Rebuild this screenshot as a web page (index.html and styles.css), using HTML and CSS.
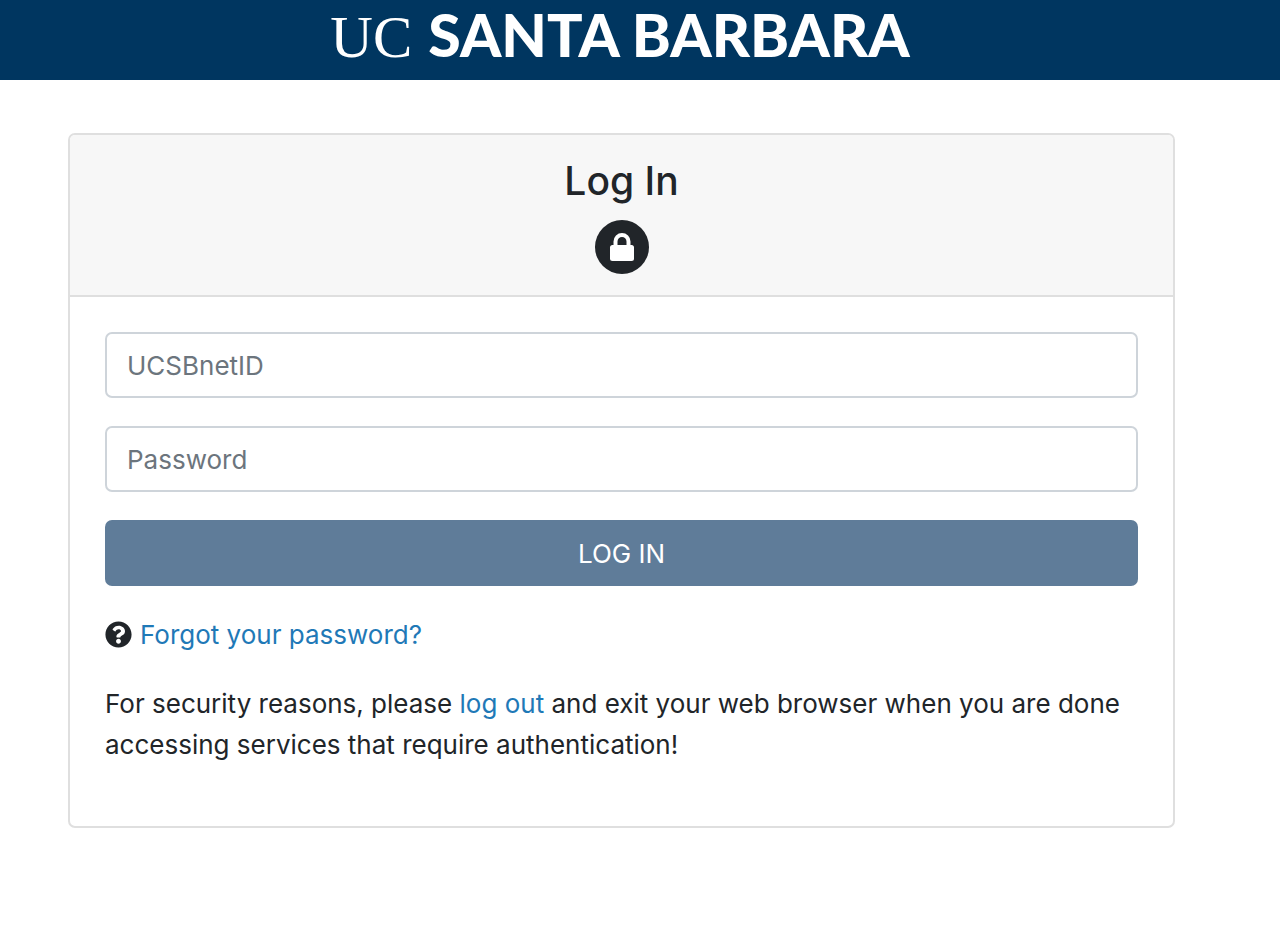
FILE: index.html
```html
<!DOCTYPE html>
<html lang="en">
<head>
<meta charset="utf-8">
<meta name="viewport" content="width=device-width, initial-scale=1">
<title>Log In</title>
<link rel="stylesheet" href="styles.css">
</head>
<body>
<header class="brand-bar">
  <div class="brand"><span class="brand-uc">UC</span> <span class="brand-name">SANTA BARBARA</span></div>
</header>
<main class="page">
  <section class="card">
    <div class="card-header">
      <h1 class="title">Log In</h1>
      <svg class="lock" viewBox="0 0 54 54" aria-hidden="true">
        <circle cx="27" cy="27" r="27" fill="#212529"/>
        <rect x="15" y="25" width="24" height="16" rx="2.500" fill="#fff"/>
        <path d="M20.500 26v-4.500a6.500 6.500 0 0 1 13 0V26" fill="none" stroke="#fff" stroke-width="4"/>
      </svg>
    </div>
    <form class="card-body">
      <input class="field" type="text" placeholder="UCSBnetID" aria-label="UCSBnetID">
      <input class="field" type="password" placeholder="Password" aria-label="Password">
      <button class="submit" type="submit">LOG IN</button>
      <p class="forgot">
        <svg class="help" viewBox="0 0 512 512" aria-hidden="true"><path fill="#212529" d="M504 256c0 136.997-111.043 248-248 248S8 392.997 8 256C8 119.083 119.043 8 256 8s248 111.083 248 248zM262.655 90c-54.497 0-89.255 22.957-116.549 63.758-3.536 5.286-2.353 12.415 2.715 16.258l34.699 26.310c5.205 3.947 12.621 3.008 16.665-2.122 17.864-22.658 30.113-35.797 57.303-35.797 20.429 0 45.698 13.148 45.698 32.958 0 14.976-12.363 22.667-32.534 33.976C247.128 238.528 216 254.941 216 296v4c0 6.627 5.373 12 12 12h56c6.627 0 12-5.373 12-12v-1.333c0-28.462 83.186-29.647 83.186-106.667 0-58.002-60.165-102-116.531-102zM256 338c-25.365 0-46 20.635-46 46 0 25.364 20.635 46 46 46s46-20.636 46-46c0-25.365-20.635-46-46-46z"/></svg>
        <a href="#">Forgot your password?</a>
      </p>
      <p class="note">For security reasons, please <a href="#">log out</a> and exit your web browser when you are done accessing services that require authentication!</p>
    </form>
  </section>
</main>
</body>
</html>
```
FILE: styles.css
```css
* { box-sizing: border-box; }
body {
  margin: 0;
  background: #fff;
  color: #212529;
  font-family: Inter, "Liberation Sans", sans-serif;
  font-size: 26px;
  line-height: 41px;
}
a { color: #1f79b7; text-decoration: none; }
.brand-bar {
  background: #003660;
  color: #fff;
  padding: 0 40px 8px 0;
  display: flex;
  justify-content: center;
}
.brand {
  display: flex;
  align-items: baseline;
  gap: 16px;
  font-size: 59px;
  line-height: 70px;
  white-space: nowrap;
}
.brand-uc { font-family: "Liberation Serif", serif; }
.brand-name { font-family: Lato, sans-serif; font-weight: 900; }
.page { padding: 53px 105px 40px 68px; }
.card { border: 2px solid #dfdfdf; border-radius: 7px; overflow: hidden; }
.card-header {
  background: #f7f7f7;
  border-bottom: 2px solid #dfdfdf;
  padding: 21px 35px;
  display: flex;
  flex-direction: column;
  align-items: center;
  gap: 14px;
}
.title { margin: 0; font-size: 39px; line-height: 50px; font-weight: 500; }
.lock { width: 54px; height: 54px; display: block; }
.card-body {
  padding: 35px 35px 61px;
  display: flex;
  flex-direction: column;
}
.field, .submit {
  width: 100%;
  height: 66px;
  margin: 0 0 28px;
  border-radius: 7px;
  font: inherit;
}
.field { border: 2px solid #ced4da; padding: 0 20px; background: #fff; color: #495057; }
.field::placeholder { color: #6c757d; opacity: 1; }
.submit { border: 0; background: #5f7c99; color: #fff; }
.forgot { display: flex; align-items: center; gap: 8px; margin: 0 0 28px; }
.help { width: 27px; height: 27px; }
.note { margin: 0; }
```
